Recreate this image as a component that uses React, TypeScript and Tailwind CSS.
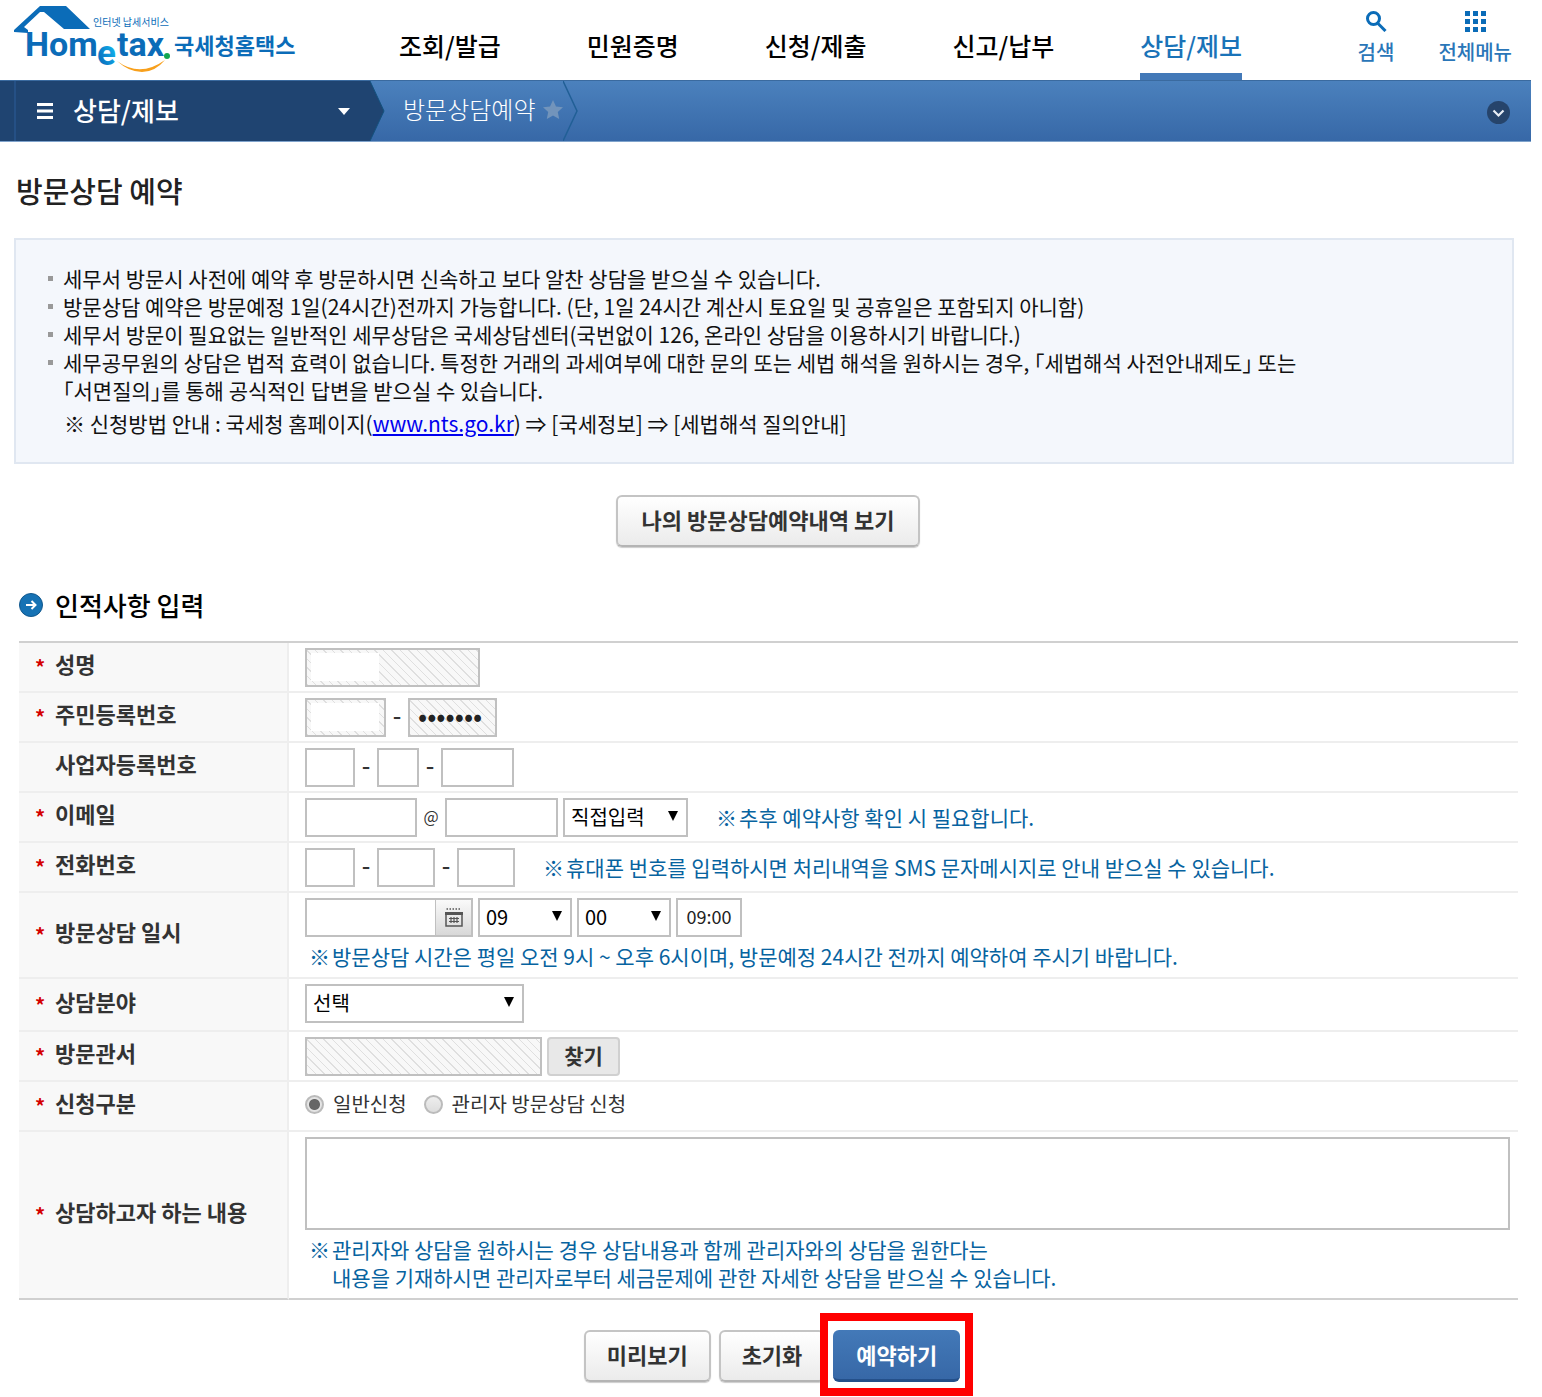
/**
 * VisitReservationPage - 홈택스 방문상담 예약 화면
 */

import React from 'react';

interface FieldRowProps {
  label: string;
  htmlFor?: string;
  required?: boolean;
  children: React.ReactNode;
}

interface SelectBoxProps {
  id: string;
  label: string;
  options: string[];
  className: string;
}

const MENUS = ['조회/발급', '민원증명', '신청/제출', '신고/납부', '상담/제보'];

const INPUT = 'h-[39px] border-2 border-[#c0c0c0] bg-white px-2 text-[21px] outline-none';
const HATCHED =
  'h-[39px] border-2 border-[#c0c0c0] px-2 outline-none bg-[repeating-linear-gradient(45deg,#dfdfdf_0_1px,#f8f8f8_1px_6px)]';
const GRAY_BUTTON =
  'h-[52px] rounded-md border-2 border-[#c4c4c4] border-b-[#b4b4b4] bg-linear-to-b from-white to-[#ebebeb] pb-1 text-[22px] font-bold leading-7 text-[#333] shadow-[0_1px_1px_#ccc]';
const RADIO =
  'h-[19px] w-[19px] appearance-none rounded-full border-2 border-[#bbb] bg-linear-to-b from-[#eee] to-[#ddd] checked:bg-[radial-gradient(#666_0_5px,#e4e4e4_6px)]';

const FieldRow: React.FC<FieldRowProps> = ({ label, htmlFor, required = true, children }) => (
  <tr className="last:[&>*]:border-b-[#d0d0d0]">
    <th
      scope="row"
      className="border-r-2 border-b-2 border-[#eee] bg-[#f8f8f8] pb-2 text-left align-middle text-[22px] leading-7 font-bold text-[#333]"
    >
      <div className="flex items-center pl-4">
        <span className="w-5 pt-2 text-[20px] leading-5 text-[#d40000]">{required && '*'}</span>
        <label htmlFor={htmlFor}>{label}</label>
      </div>
    </th>
    <td className="border-b-2 border-[#eee] py-[5px] pr-2 pb-1 pl-4 align-top">{children}</td>
  </tr>
);

const SelectBox: React.FC<SelectBoxProps> = ({ id, label, options, className }) => (
  <div className={`relative ${className}`}>
    <select
      id={id}
      aria-label={label}
      className="block h-[39px] w-full appearance-none border-2 border-[#c0c0c0] bg-white pb-[2px] pl-[6px] text-[20px] leading-7 text-black outline-none"
    >
      {options.map((option) => (
        <option key={option}>{option}</option>
      ))}
    </select>
    <svg className="pointer-events-none absolute top-[13px] right-[10px] h-[10px] w-[10px]" viewBox="0 0 10 10">
      <path d="M0 0h10L5 10z" />
    </svg>
  </div>
);

const Dash = () => (
  <span className="w-[22px] pb-[5px] text-center text-[24px] leading-7 font-medium text-[#333]">-</span>
);

const Note: React.FC<{ className?: string; children: React.ReactNode }> = ({ className = '', children }) => (
  <p className={`flex gap-[2px] text-[21px] leading-7 text-[#0763a0] ${className}`}>
    <span>※</span>
    <span>{children}</span>
  </p>
);

const Logo = () => (
  <svg className="h-20 w-[300px] shrink-0" viewBox="0 0 300 80" role="img" aria-label="Hometax 국세청홈택스">
    <defs>
      <linearGradient id="logo-e" x1="0" y1="1" x2="1" y2="0">
        <stop offset="0.3" stopColor="#0a78c4" />
        <stop offset="0.8" stopColor="#12b4ee" />
      </linearGradient>
    </defs>
    <path fill="#0b6cb8" d="M14 32v-2L40 6h26l24 23H64L44 12h-4L24 27l4 3v3z" />
    <g fontFamily="Roboto, sans-serif" fontWeight="700" fill="#0b6cb8">
      <text x="25" y="56" fontSize="34">
        Hom
      </text>
      <text x="117" y="56" fontSize="34">
        tax
      </text>
      <text x="97" y="65" fontSize="35" fill="url(#logo-e)">
        e
      </text>
    </g>
    <circle cx="167" cy="56" r="3" fill="#12a650" />
    <path fill="#f8a01c" d="M117 61q23 17 48-1q-10 12-23 12q-13 0-25-11z" />
    <g fontFamily="'Noto Sans CJK KR', sans-serif" fill="#0b6cb8">
      <text x="93" y="26" fontSize="10">
        인터넷 납세서비스
      </text>
      <text x="174" y="54" fontSize="22" fontWeight="700">
        국세청홈택스
      </text>
    </g>
  </svg>
);

const Header = () => (
  <header className="flex h-20 pr-[30px]">
    <a href="#home">
      <Logo />
    </a>
    <nav className="ml-[99px] flex gap-[86px]">
      {MENUS.map((menu) => (
        <a
          key={menu}
          href="#menu"
          className={`flex h-20 items-end border-b-[7px] pb-[10px] text-[25px] leading-9 font-medium whitespace-nowrap ${
            menu === '상담/제보' ? 'border-[#4379b8] text-[#1a73b8]' : 'border-transparent text-black'
          }`}
        >
          {menu}
        </a>
      ))}
    </nav>
    <div className="ml-auto flex gap-11 pt-[10px] text-[20px] leading-7 font-medium whitespace-nowrap text-[#2a76b8]">
      <button type="button" className="flex flex-col items-center gap-[6px]">
        <svg className="h-[22px] w-[22px]" viewBox="0 0 22 22" fill="none" stroke="#0b6cb8" strokeWidth="3">
          <circle cx="8.5" cy="8.5" r="6" />
          <path d="M12.5 13l8 8" />
        </svg>
        <span>검색</span>
      </button>
      <button type="button" className="flex flex-col items-center gap-[6px]">
        <svg className="h-[22px] w-[22px]" viewBox="0 0 22 22" fill="#0b6cb8">
          {[1, 9, 17].map((y) => [1, 9, 17].map((x) => <rect key={`${x}-${y}`} x={x} y={y} width="5" height="5" />))}
        </svg>
        <span>전체메뉴</span>
      </button>
    </div>
  </header>
);

const Breadcrumb = () => (
  <div className="mr-[11px] flex h-[62px] items-stretch border-y border-t-[#3a6a9f] border-b-[#7fa3cc] bg-linear-to-b from-[#4b81bd] to-[#3768a7] text-white">
    <div className="w-4 border-r-2 border-[#255085] bg-[#1f4471]" />
    <button type="button" className="flex w-[354px] items-center bg-[#1f4471] pr-[20px] pl-[21px]">
      <svg className="h-4 w-4" viewBox="0 0 16 16" fill="#fff">
        <path d="M0 0h16v3H0zM0 6.500h16v3H0zM0 13h16v3H0z" />
      </svg>
      <span className="ml-5 pb-[2px] text-[26px] leading-9 font-medium">상담/제보</span>
      <svg className="ml-auto h-[7px] w-3" viewBox="0 0 12 7" fill="#fff">
        <path d="M0 0h12L6 7z" />
      </svg>
    </button>
    <svg className="h-[60px] w-[15px]" viewBox="0 0 15 60">
      <path d="M0 0l14 30L0 60z" fill="#1f4471" />
      <path d="M0 0l14 30L0 60" fill="none" stroke="#14527f" />
    </svg>
    <div className="flex items-center pl-[18px]">
      <span className="pb-1 text-[24px] leading-9 font-light">방문상담예약</span>
      <svg className="mb-[3px] ml-[8px] h-5 w-5" viewBox="0 0 20 20" fill="#7294bb">
        <path d="M10 0l3 6.500 7 .8-5.200 4.800L16.200 19 10 15.600 3.800 19l1.400-6.900L0 7.300l7-.8z" />
      </svg>
    </div>
    <svg className="h-[60px] w-[15px]" viewBox="0 0 15 60" fill="none" stroke="#215f96" strokeWidth="1.500">
      <path d="M0 0l14 30L0 60" />
    </svg>
    <button type="button" aria-label="펼치기" className="mt-[2px] mr-[21px] ml-auto self-center">
      <svg className="h-[23px] w-[23px]" viewBox="0 0 23 23" fill="none">
        <circle cx="11.500" cy="11.500" r="11.500" fill="#26446b" />
        <path d="M6.500 9.500l5 5 5-5" stroke="#e8eef5" strokeWidth="2.200" />
      </svg>
    </button>
  </div>
);

const Guide = () => (
  <section className="mr-7 ml-[14px] border-2 border-[#e0e7f1] bg-[#f4f7fc] px-8 pt-6 pb-[25px] text-[21px] leading-7 text-[#111]">
    <ul>
      {[
        '세무서 방문시 사전에 예약 후 방문하시면 신속하고 보다 알찬 상담을 받으실 수 있습니다.',
        '방문상담 예약은 방문예정 1일(24시간)전까지 가능합니다. (단, 1일 24시간 계산시 토요일 및 공휴일은 포함되지 아니함)',
        '세무서 방문이 필요없는 일반적인 세무상담은 국세상담센터(국번없이 126, 온라인 상담을 이용하시기 바랍니다.)',
        '세무공무원의 상담은 법적 효력이 없습니다. 특정한 거래의 과세여부에 대한 문의 또는 세법 해석을 원하시는 경우, ｢세법해석 사전안내제도｣ 또는\n｢서면질의｣를 통해 공식적인 답변을 받으실 수 있습니다.',
      ].map((line) => (
        <li key={line} className="flex gap-[10px] whitespace-pre-line">
          <span className="mt-3 h-[5px] w-[5px] shrink-0 bg-[#999]" />
          <span>{line}</span>
        </li>
      ))}
    </ul>
    <p className="mt-[5px] pl-4">
      ※ 신청방법 안내 : 국세청 홈페이지(
      <a href="#nts" className="text-[#0000ee] underline">
        www.nts.go.kr
      </a>
      ) ⇒ [국세정보] ⇒ [세법해석 질의안내]
    </p>
  </section>
);

const ReservationForm = () => (
  <table className="mt-[18px] mr-6 ml-[19px] w-[calc(100%-43px)] table-fixed border-separate border-spacing-0 border-t-2 border-[#d0d0d0]">
    <colgroup>
      <col className="w-[270px]" />
      <col />
    </colgroup>
    <tbody>
      <FieldRow label="성명" htmlFor="name">
        <div className="relative flex">
          <input id="name" readOnly className={`${HATCHED} w-[175px] text-[21px]`} />
          <span className="absolute top-[5px] left-[6px] h-7 w-[68px] bg-white" />
        </div>
      </FieldRow>
      <FieldRow label="주민등록번호" htmlFor="rrn1">
        <div className="relative flex items-center">
          <input id="rrn1" readOnly className={`${HATCHED} w-[81px] text-[21px]`} />
          <span className="absolute top-[5px] left-[6px] h-7 w-[68px] bg-white" />
          <Dash />
          <input
            type="password"
            aria-label="주민등록번호 뒷자리"
            readOnly
            defaultValue="1234567"
            className={`${HATCHED} w-[89px] pb-1 text-[27px]`}
          />
        </div>
      </FieldRow>
      <FieldRow label="사업자등록번호" htmlFor="biz1" required={false}>
        <div className="flex items-center">
          <input id="biz1" className={`${INPUT} w-[50px]`} />
          <Dash />
          <input aria-label="사업자등록번호 2" className={`${INPUT} w-[42px]`} />
          <Dash />
          <input aria-label="사업자등록번호 3" className={`${INPUT} w-[73px]`} />
        </div>
      </FieldRow>
      <FieldRow label="이메일" htmlFor="email">
        <div className="flex items-center">
          <input id="email" className={`${INPUT} w-[112px]`} />
          <span className="w-7 pb-1 text-center text-[16px] leading-7 text-[#333]">@</span>
          <input aria-label="이메일 도메인" className={`${INPUT} w-[113px]`} />
          <SelectBox id="domain" label="이메일 도메인 선택" options={['직접입력']} className="ml-[5px] w-[125px]" />
          <Note className="ml-7 pb-[2px]">추후 예약사항 확인 시 필요합니다.</Note>
        </div>
      </FieldRow>
      <FieldRow label="전화번호" htmlFor="tel1">
        <div className="flex items-center">
          <input id="tel1" className={`${INPUT} w-[50px]`} />
          <Dash />
          <input aria-label="전화번호 2" className={`${INPUT} w-[58px]`} />
          <Dash />
          <input aria-label="전화번호 3" className={`${INPUT} w-[58px]`} />
          <Note className="ml-7 pb-[2px]">
            휴대폰 번호를 입력하시면 처리내역을 SMS 문자메시지로 안내 받으실 수 있습니다.
          </Note>
        </div>
      </FieldRow>
      <FieldRow label="방문상담 일시" htmlFor="date">
        <div className="flex items-center gap-[5px]">
          <div className="flex h-[39px] w-[168px] border-2 border-[#c0c0c0]">
            <input id="date" className="min-w-0 flex-1 px-2 text-[21px] outline-none" />
            <button
              type="button"
              aria-label="달력"
              className="flex w-9 items-center justify-center border-l border-[#c0c0c0] bg-linear-to-b from-[#fafafa] to-[#d8d8d8]"
            >
              <svg className="h-[19px] w-[18px]" viewBox="0 0 18 19" fill="none" stroke="#555">
                <path d="M1.500 1h15" strokeWidth="1.500" strokeDasharray="1.500 1.500" />
                <path d="M1 6.500v11.500h16V6.500" strokeWidth="1.500" />
                <path d="M0 5.500h18" strokeWidth="3" />
                <path d="M4 10.500h10M4 13.500h10M6 9v6M9 9v6M12 9v6" strokeWidth="1.200" />
              </svg>
            </button>
          </div>
          <SelectBox id="hour" label="시" options={['09']} className="w-[94px]" />
          <SelectBox id="minute" label="분" options={['00']} className="w-[94px]" />
          <input
            aria-label="예약 시간"
            readOnly
            defaultValue="09:00"
            className="h-[39px] w-[66px] border-2 border-[#c0c0c0] pb-1 text-center text-[18px] outline-none"
          />
        </div>
        <Note className="mt-[5px] mb-[3px] ml-1">
          방문상담 시간은 평일 오전 9시 ~ 오후 6시이며, 방문예정 24시간 전까지 예약하여 주시기 바랍니다.
        </Note>
      </FieldRow>
      <FieldRow label="상담분야" htmlFor="field">
        <SelectBox id="field" label="상담분야" options={['선택']} className="mb-[3px] w-[219px]" />
      </FieldRow>
      <FieldRow label="방문관서" htmlFor="office">
        <div className="flex gap-[5px]">
          <input id="office" readOnly className={`${HATCHED} w-[237px] text-[21px]`} />
          <button
            type="button"
            className="h-[39px] w-[73px] rounded-sm border-2 border-[#d0d0d0] bg-[#e8e8e8] pb-1 text-[21px] leading-7 font-bold text-[#333]"
          >
            찾기
          </button>
        </div>
      </FieldRow>
      <FieldRow label="신청구분" htmlFor="general">
        <div className="flex h-[39px] items-center pb-1 text-[20px] leading-7 text-[#333]">
          <input type="radio" id="general" name="kind" defaultChecked className={RADIO} />
          <label htmlFor="general" className="ml-[9px] pb-[2px]">
            일반신청
          </label>
          <input type="radio" id="manager" name="kind" className={`${RADIO} ml-[17px]`} />
          <label htmlFor="manager" className="ml-[9px] pb-[2px]">
            관리자 방문상담 신청
          </label>
        </div>
      </FieldRow>
      <FieldRow label="상담하고자 하는 내용" htmlFor="content">
        <textarea
          id="content"
          className="block h-[93px] w-full resize-none border-2 border-[#c0c0c0] bg-white p-2 text-[21px] outline-none"
        />
        <Note className="mt-[5px] mb-[3px] ml-1">
          관리자와 상담을 원하시는 경우 상담내용과 함께 관리자와의 상담을 원한다는
          <br />
          내용을 기재하시면 관리자로부터 세금문제에 관한 자세한 상담을 받으실 수 있습니다.
        </Note>
      </FieldRow>
    </tbody>
  </table>
);

export default function App() {
  return (
    <div className="bg-white font-['Noto_Sans_CJK_KR',sans-serif] text-[#222]">
      <Header />
      <Breadcrumb />
      <main className="pb-[14px]">
        <h1 className="mt-7 mb-7 ml-4 text-[29px] leading-10 font-medium text-[#222]">방문상담 예약</h1>
        <Guide />
        <div className="mt-[31px] flex justify-center pr-[6px]">
          <button type="button" className={`${GRAY_BUTTON} px-6`}>
            나의 방문상담예약내역 보기
          </button>
        </div>
        <h2 className="mt-10 ml-[19px] flex items-center gap-3 text-[26px] leading-9 font-medium text-black">
          <svg className="h-6 w-6" viewBox="0 0 24 24" fill="none">
            <circle cx="12" cy="12" r="11.500" fill="#1672b4" stroke="#12588d" />
            <path d="M7 12h9M12.500 8l4 4-4 4" stroke="#fff" strokeWidth="2" />
          </svg>
          인적사항 입력
        </h2>
        <ReservationForm />
        <div className="mt-[30px] flex justify-center gap-2 pl-[2px]">
          <button type="button" className={`${GRAY_BUTTON} px-[21px]`}>
            미리보기
          </button>
          <button type="button" className={`${GRAY_BUTTON} px-[21px]`}>
            초기화
          </button>
          <div className="relative">
            <button
              type="submit"
              className="h-[52px] rounded-md border-b-[3px] border-[#24508a] bg-linear-to-b from-[#4379b8] to-[#3768a7] px-[23px] pb-[2px] text-[22px] leading-7 font-bold text-white"
            >
              예약하기
            </button>
            <span className="pointer-events-none absolute -top-[17px] -right-[13px] -bottom-[14px] -left-[13px] border-8 border-[#ff0000]" />
          </div>
        </div>
      </main>
    </div>
  );
}
